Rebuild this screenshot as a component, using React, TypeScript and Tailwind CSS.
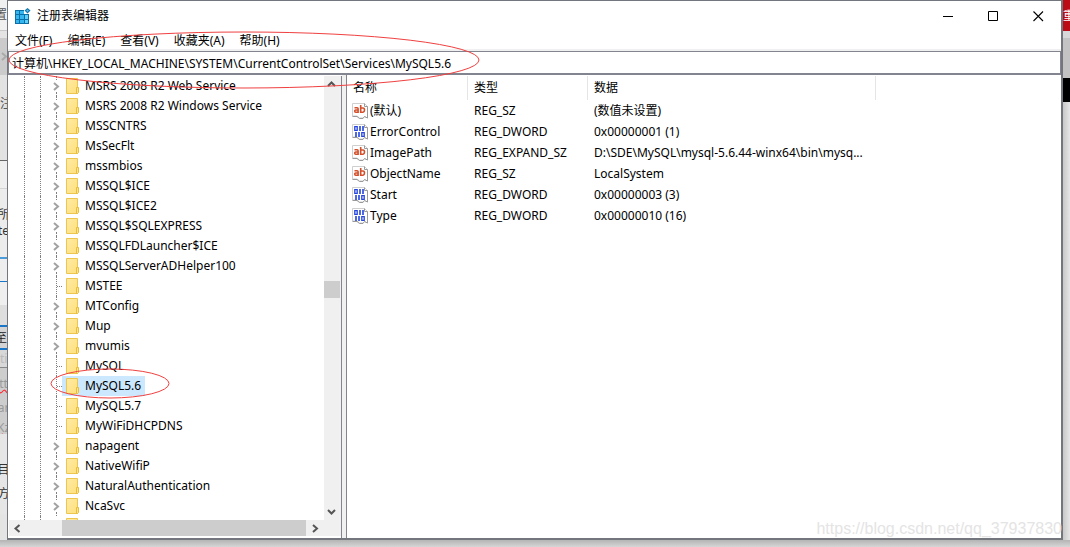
import type { ReactNode } from "react";

type TreeKey = { name: string; leaf?: boolean; selected?: boolean };
type RegValue = { name: string; type: string; data: string; binary?: boolean };

const keys: TreeKey[] = [
  { name: "MSRS 2008 R2 Web Service" },
  { name: "MSRS 2008 R2 Windows Service" },
  { name: "MSSCNTRS" },
  { name: "MsSecFlt" },
  { name: "mssmbios" },
  { name: "MSSQL$ICE" },
  { name: "MSSQL$ICE2" },
  { name: "MSSQL$SQLEXPRESS" },
  { name: "MSSQLFDLauncher$ICE" },
  { name: "MSSQLServerADHelper100" },
  { name: "MSTEE", leaf: true },
  { name: "MTConfig" },
  { name: "Mup" },
  { name: "mvumis" },
  { name: "MySQL", leaf: true },
  { name: "MySQL5.6", leaf: true, selected: true },
  { name: "MySQL5.7", leaf: true },
  { name: "MyWiFiDHCPDNS", leaf: true },
  { name: "napagent" },
  { name: "NativeWifiP" },
  { name: "NaturalAuthentication" },
  { name: "NcaSvc" },
];

const values: RegValue[] = [
  { name: "(默认)", type: "REG_SZ", data: "(数值未设置)" },
  { name: "ErrorControl", type: "REG_DWORD", data: "0x00000001 (1)", binary: true },
  { name: "ImagePath", type: "REG_EXPAND_SZ", data: "D:\\SDE\\MySQL\\mysql-5.6.44-winx64\\bin\\mysq..." },
  { name: "ObjectName", type: "REG_SZ", data: "LocalSystem" },
  { name: "Start", type: "REG_DWORD", data: "0x00000003 (3)", binary: true },
  { name: "Type", type: "REG_DWORD", data: "0x00000010 (16)", binary: true },
];

const menus = ["文件(F)", "编辑(E)", "查看(V)", "收藏夹(A)", "帮助(H)"];

function AppIcon() {
  return (
    <svg className="h-4 w-4 shrink-0" viewBox="0 0 16 16" aria-hidden="true">
      <path d="M0 2h9v4h5v10H0z" fill="#0b6fa8" />
      <g fill="#35b6ee">
        <path d="M1 3h3v3H1zM5 3h4v3H5zM1 7h3v4H1zM5 7h4v4H5zM1 12h3v3H1zM5 12h4v3H5z" />
      </g>
      <g fill="#5fd0fa">
        <path d="M10 7h3v4h-3zM10 12h3v3h-3z" />
      </g>
      <path d="M12.500 0l3 2.500-3 3-3-3z" fill="#0f76ae" />
      <path d="M12.500 1.400l1.300 1.200-1.300 1.300-1.300-1.300z" fill="#5fbde8" />
    </svg>
  );
}

function FolderIcon() {
  return (
    <svg className="h-4 w-[13px] shrink-0" viewBox="0 0 13 16" aria-hidden="true">
      <defs>
        <linearGradient id="folder" x1="0" y1="0" x2="1" y2="1">
          <stop offset="0" stopColor="#ffeaa5" />
          <stop offset="1" stopColor="#ffe07c" />
        </linearGradient>
      </defs>
      <path d="M.5.5h11v15H.5z" fill="url(#folder)" stroke="#ecc64f" />
      <path d="M10.500 9.500h2v5l-1 1h-1z" fill="#ffe48c" stroke="#e9bd3b" />
    </svg>
  );
}

function ValueIcon({ binary }: { binary?: boolean }) {
  return (
    <svg className="h-4 w-4 shrink-0" viewBox="0 0 16 16" aria-hidden="true">
      <path d="M.5.5h12l3 3v11.500l-3-1.500-1.500 1.500H7.500l-2.500-2H.5z" fill="#fff" stroke="#cfcfcf" />
      <path d="M12.500.5v3h3V15l-3-1.500L11 15.500H7.500l-2.500-2H.5" fill="none" stroke="#9a9a9a" />
      {binary ? (
        <g fill="none" stroke="#2444dc">
          <path d="M2.800 2.700h2.400v3.600H2.800zM9.800 8.700h2.400v3.600H9.800z" strokeWidth="1.300" />
          <path d="M8 2v5M11 2v5M4 8v5M7 8v5" strokeWidth="1.600" />
        </g>
      ) : (
        <g fill="none" stroke="#d4502c" strokeWidth="1.600">
          <path d="M2.500 4.700h2.600q1 0 1 1v4.300M6 7H3.700q-1 0-1 1.100t1 1.100H6" />
          <path d="M8.700 2v8M8.700 5h2.300q1.500 0 1.500 2t-1.500 2.200H8.700" />
        </g>
      )}
    </svg>
  );
}

function Chevron({ direction, className }: { direction: "left" | "right" | "up" | "down"; className?: string }) {
  const paths = {
    left: "M6.500 1L2.500 4.500l4 3.500",
    right: "M2 1l4 3.500L2 8",
    up: "M1 6l3.500-3.500L8 6",
    down: "M1 3l3.500 3.500L8 3",
  };
  return (
    <svg className={"h-[9px] w-[9px] shrink-0 " + (className ?? "")} viewBox="0 0 9 9" aria-hidden="true">
      <path d={paths[direction]} fill="none" stroke="currentColor" strokeWidth="2" />
    </svg>
  );
}

function TreeRow({ item }: { item: TreeKey }) {
  return (
    <li className="flex h-5 shrink-0 items-stretch">
      <span className="ml-4 w-4 border-l border-dotted border-[#808080]" />
      <span className="w-[11px] border-l border-dotted border-[#808080]" />
      {item.leaf ? (
        <span className="flex w-[11px] pl-[5px]">
          <span className="w-px border-l border-dotted border-[#808080]" />
          <span className="h-[11px] grow border-b border-dotted border-[#808080]" />
        </span>
      ) : (
        <span className="flex w-[11px] flex-col items-center">
          <span className="h-1 w-px border-l border-dotted border-[#808080]" />
          <span className="flex grow items-center">
            <Chevron direction="right" className="text-[#a2a2a2]" />
          </span>
          <span className="h-1 w-px border-l border-dotted border-[#808080]" />
        </span>
      )}
      <button
        type="button"
        className={
          item.selected
            ? "flex items-center gap-1.5 bg-[#cce8ff] px-1 whitespace-nowrap"
            : "flex items-center gap-1.5 px-1 whitespace-nowrap"
        }
      >
        <FolderIcon />
        {item.name}
      </button>
    </li>
  );
}

function Slice({ className, children }: { className: string; children?: ReactNode }) {
  return <div className={"flex shrink-0 items-center overflow-hidden whitespace-nowrap " + className}>{children}</div>;
}

function LeftBackdrop() {
  return (
    <div className="flex w-[7px] shrink-0 flex-col overflow-hidden bg-[#e9e9e9] text-[12px] text-[#555]" aria-hidden="true">
      <Slice className="h-[31px] justify-end border-b border-[#c8c8c8] bg-[#f0f0f0]">置</Slice>
      <Slice className="h-[7px] bg-[#e4e4e4]" />
      <Slice className="h-[37px] bg-[#cbcbcb]">
        <Chevron direction="right" className="text-[#aaa]" />
      </Slice>
      <Slice className="h-[86px] border-b border-[#666] bg-[#e2e2e2] pb-7">注</Slice>
      <Slice className="h-[28px] border-b border-[#d4d4d4] bg-[#eee]" />
      <Slice className="h-[70px] flex-col justify-center border-b-2 border-[#4a9bd8] bg-[#ececec] text-[#333]">
        <span className="leading-4">所</span>
        <span className="leading-4">te</span>
      </Slice>
      <Slice className="h-[23px] border-b border-[#1976c8] bg-[#eee]" />
      <Slice className="h-[23px] bg-[#efefef]" />
      <Slice className="h-[20px] bg-[#dedede]" />
      <Slice className="h-[25px] justify-end border-y-2 border-[#1976c8] bg-[#d4d4d4] text-[#222]">至</Slice>
      <Slice className="h-[18px] border-b border-[#888] bg-[#d8d8d8] text-[#bbb]">tip</Slice>
      <Slice className="h-[66px] flex-col bg-[#cdcdcd] text-[#999]">
        <span className="h-6 pt-2 underline decoration-red-500 decoration-wavy">tt</span>
        <span className="h-5 pt-2">ar</span>
        <span className="h-6 pt-2 underline decoration-red-500 decoration-wavy">Kz</span>
      </Slice>
      <Slice className="h-[80px] flex-col justify-center bg-[#e6e6e6] pt-4 text-[#333]">
        <span className="leading-6">目</span>
        <span className="leading-6">方</span>
      </Slice>
      <div className="grow bg-[#e4e4e4]" />
    </div>
  );
}

function RightBackdrop() {
  return (
    <div className="flex w-[7px] shrink-0 flex-col overflow-hidden bg-linear-to-r from-[#c8c8c8] to-[#e6e6e6] text-[12px]" aria-hidden="true">
      <Slice className="h-[31px] bg-[#ba0c16] text-white">重</Slice>
      <Slice className="h-[7px] bg-[#d8d8d8]" />
      <Slice className="h-[40px] bg-[#c3c3c3]" />
      <Slice className="h-[24px] bg-black" />
    </div>
  );
}

function TitleBar() {
  return (
    <header className="flex h-[30px] shrink-0 items-center pl-[7px]">
      <AppIcon />
      <h1 className="pl-1.5 text-[12px]">注册表编辑器</h1>
      <div className="ml-auto flex h-full items-stretch">
        <button type="button" aria-label="最小化" className="flex w-[45px] items-center justify-center">
          <svg className="h-[11px] w-[11px]" viewBox="0 0 11 11"><path d="M0 5.500h10" stroke="#000" /></svg>
        </button>
        <button type="button" aria-label="最大化" className="flex w-[45px] items-center justify-center">
          <svg className="h-[11px] w-[11px]" viewBox="0 0 11 11"><path d="M.5.5h9v9h-9z" fill="none" stroke="#000" /></svg>
        </button>
        <button type="button" aria-label="关闭" className="flex w-[45px] items-center justify-center">
          <svg className="h-[11px] w-[11px]" viewBox="0 0 11 11"><path d="M.5.5l9.500 9.500M10 .5L.5 10" stroke="#000" strokeWidth="1.100" /></svg>
        </button>
      </div>
    </header>
  );
}

function TreePane() {
  return (
    <nav aria-label="注册表项" className="flex w-[334px] shrink-0 flex-col border-r border-[#82858f] pb-[2px]">
      <div className="flex min-h-0 grow">
        <div className="flex min-w-0 grow flex-col overflow-hidden">
          <ul className="flex shrink-0 flex-col">
            {keys.map((item) => (
              <TreeRow key={item.name} item={item} />
            ))}
          </ul>
          <div className="flex h-5 shrink-0 items-center">
            <span className="ml-4 h-full w-4 border-l border-dotted border-[#808080]" />
            <span className="h-full w-[26px] border-l border-dotted border-[#808080]" />
            <FolderIcon />
          </div>
        </div>
        <div className="flex w-[17px] shrink-0 flex-col items-center bg-[#f0f0f0] text-[#555]">
          <span className="mr-0.5 flex h-[17px] items-center"><Chevron direction="up" /></span>
          <span className="flex min-h-0 w-full grow flex-col">
            <span className="grow-[188]" />
            <span className="mr-px h-[17px] bg-[#cdcdcd]" />
            <span className="grow-[205]" />
          </span>
          <span className="mr-0.5 flex h-[17px] items-center"><Chevron direction="down" /></span>
        </div>
      </div>
      <div className="ml-px flex h-4 shrink-0 items-center bg-[#f0f0f0] text-[#555]">
        <span className="flex w-[17px] justify-center"><Chevron direction="left" /></span>
        <span className="w-9" />
        <span className="h-full grow bg-[#cdcdcd]" />
        <span className="flex w-[18px] justify-center"><Chevron direction="right" /></span>
        <span className="w-[17px]" />
      </div>
    </nav>
  );
}

function ValuesPane() {
  return (
    <section aria-label="值" className="min-w-0 grow border-l border-[#82858f] bg-white pt-px">
      <table className="table-fixed border-separate border-spacing-0 text-left">
        <colgroup>
          <col className="w-[121px]" />
          <col className="w-[120px]" />
          <col className="w-[288px]" />
        </colgroup>
        <thead>
          <tr className="h-6">
            {["名称", "类型", "数据"].map((title) => (
              <th key={title} scope="col" className="border-r border-[#e5e5e5] p-0 pl-1.5 text-[12px] font-normal">
                {title}
              </th>
            ))}
          </tr>
        </thead>
        <tbody>
          {values.map((value) => (
            <tr key={value.name} className="h-[21px]">
              <td className="p-0 pl-[5px]">
                <span className="flex items-center gap-0.5 whitespace-nowrap">
                  <ValueIcon binary={value.binary} />
                  {value.name}
                </span>
              </td>
              <td className="p-0 pl-1.5 whitespace-nowrap">{value.type}</td>
              <td className="p-0 pl-1.5 whitespace-nowrap">{value.data}</td>
            </tr>
          ))}
        </tbody>
      </table>
    </section>
  );
}

export default function App() {
  return (
    <div className="relative flex h-screen flex-col overflow-hidden bg-[#c6c6c6] font-['Noto_Sans','Noto_Sans_CJK_SC',sans-serif] text-[12px] leading-4 text-black">
      <div className="flex min-h-0 grow">
        <LeftBackdrop />
        <main className="flex min-w-0 grow flex-col border border-r-2 border-b-2 border-[#73767d] bg-white">
          <TitleBar />
          <div className="flex h-[18px] shrink-0 items-center gap-[15px] pt-0.5 pl-[7px]">
            {menus.map((label) => (
              <button key={label} type="button" className="whitespace-nowrap">{label}</button>
            ))}
          </div>
          <div className="h-[2px] shrink-0 bg-[#f0f0f0]" />
          <input
            aria-label="地址"
            defaultValue={"计算机\\HKEY_LOCAL_MACHINE\\SYSTEM\\CurrentControlSet\\Services\\MySQL5.6"}
            className="h-6 w-full shrink-0 border border-b-2 border-[#82858f] bg-white pl-[3px] outline-none"
          />
          <div className="flex min-h-0 grow bg-[#f0f0f0]">
            <div className="flex bg-white pt-px">
              <TreePane />
            </div>
            <div className="w-1 shrink-0" />
            <ValuesPane />
          </div>
        </main>
        <RightBackdrop />
      </div>
      <div className="h-[7px] shrink-0 bg-linear-to-b from-[#b4b4b4] to-[#d6d6d6]" />
      <p className="absolute right-2 bottom-2 font-['Liberation_Sans',sans-serif] text-[16px] leading-5 text-[#e4e4e4]">
        https://blog.csdn.net/qq_37937830
      </p>
      <svg className="pointer-events-none absolute top-0 left-0 h-[410px] w-[490px]" viewBox="0 0 490 410" aria-hidden="true">
        <g fill="none" stroke="#f04040">
          <ellipse cx="244" cy="60" rx="235" ry="28" />
          <ellipse cx="110" cy="383.500" rx="59" ry="14.500" />
        </g>
      </svg>
    </div>
  );
}
